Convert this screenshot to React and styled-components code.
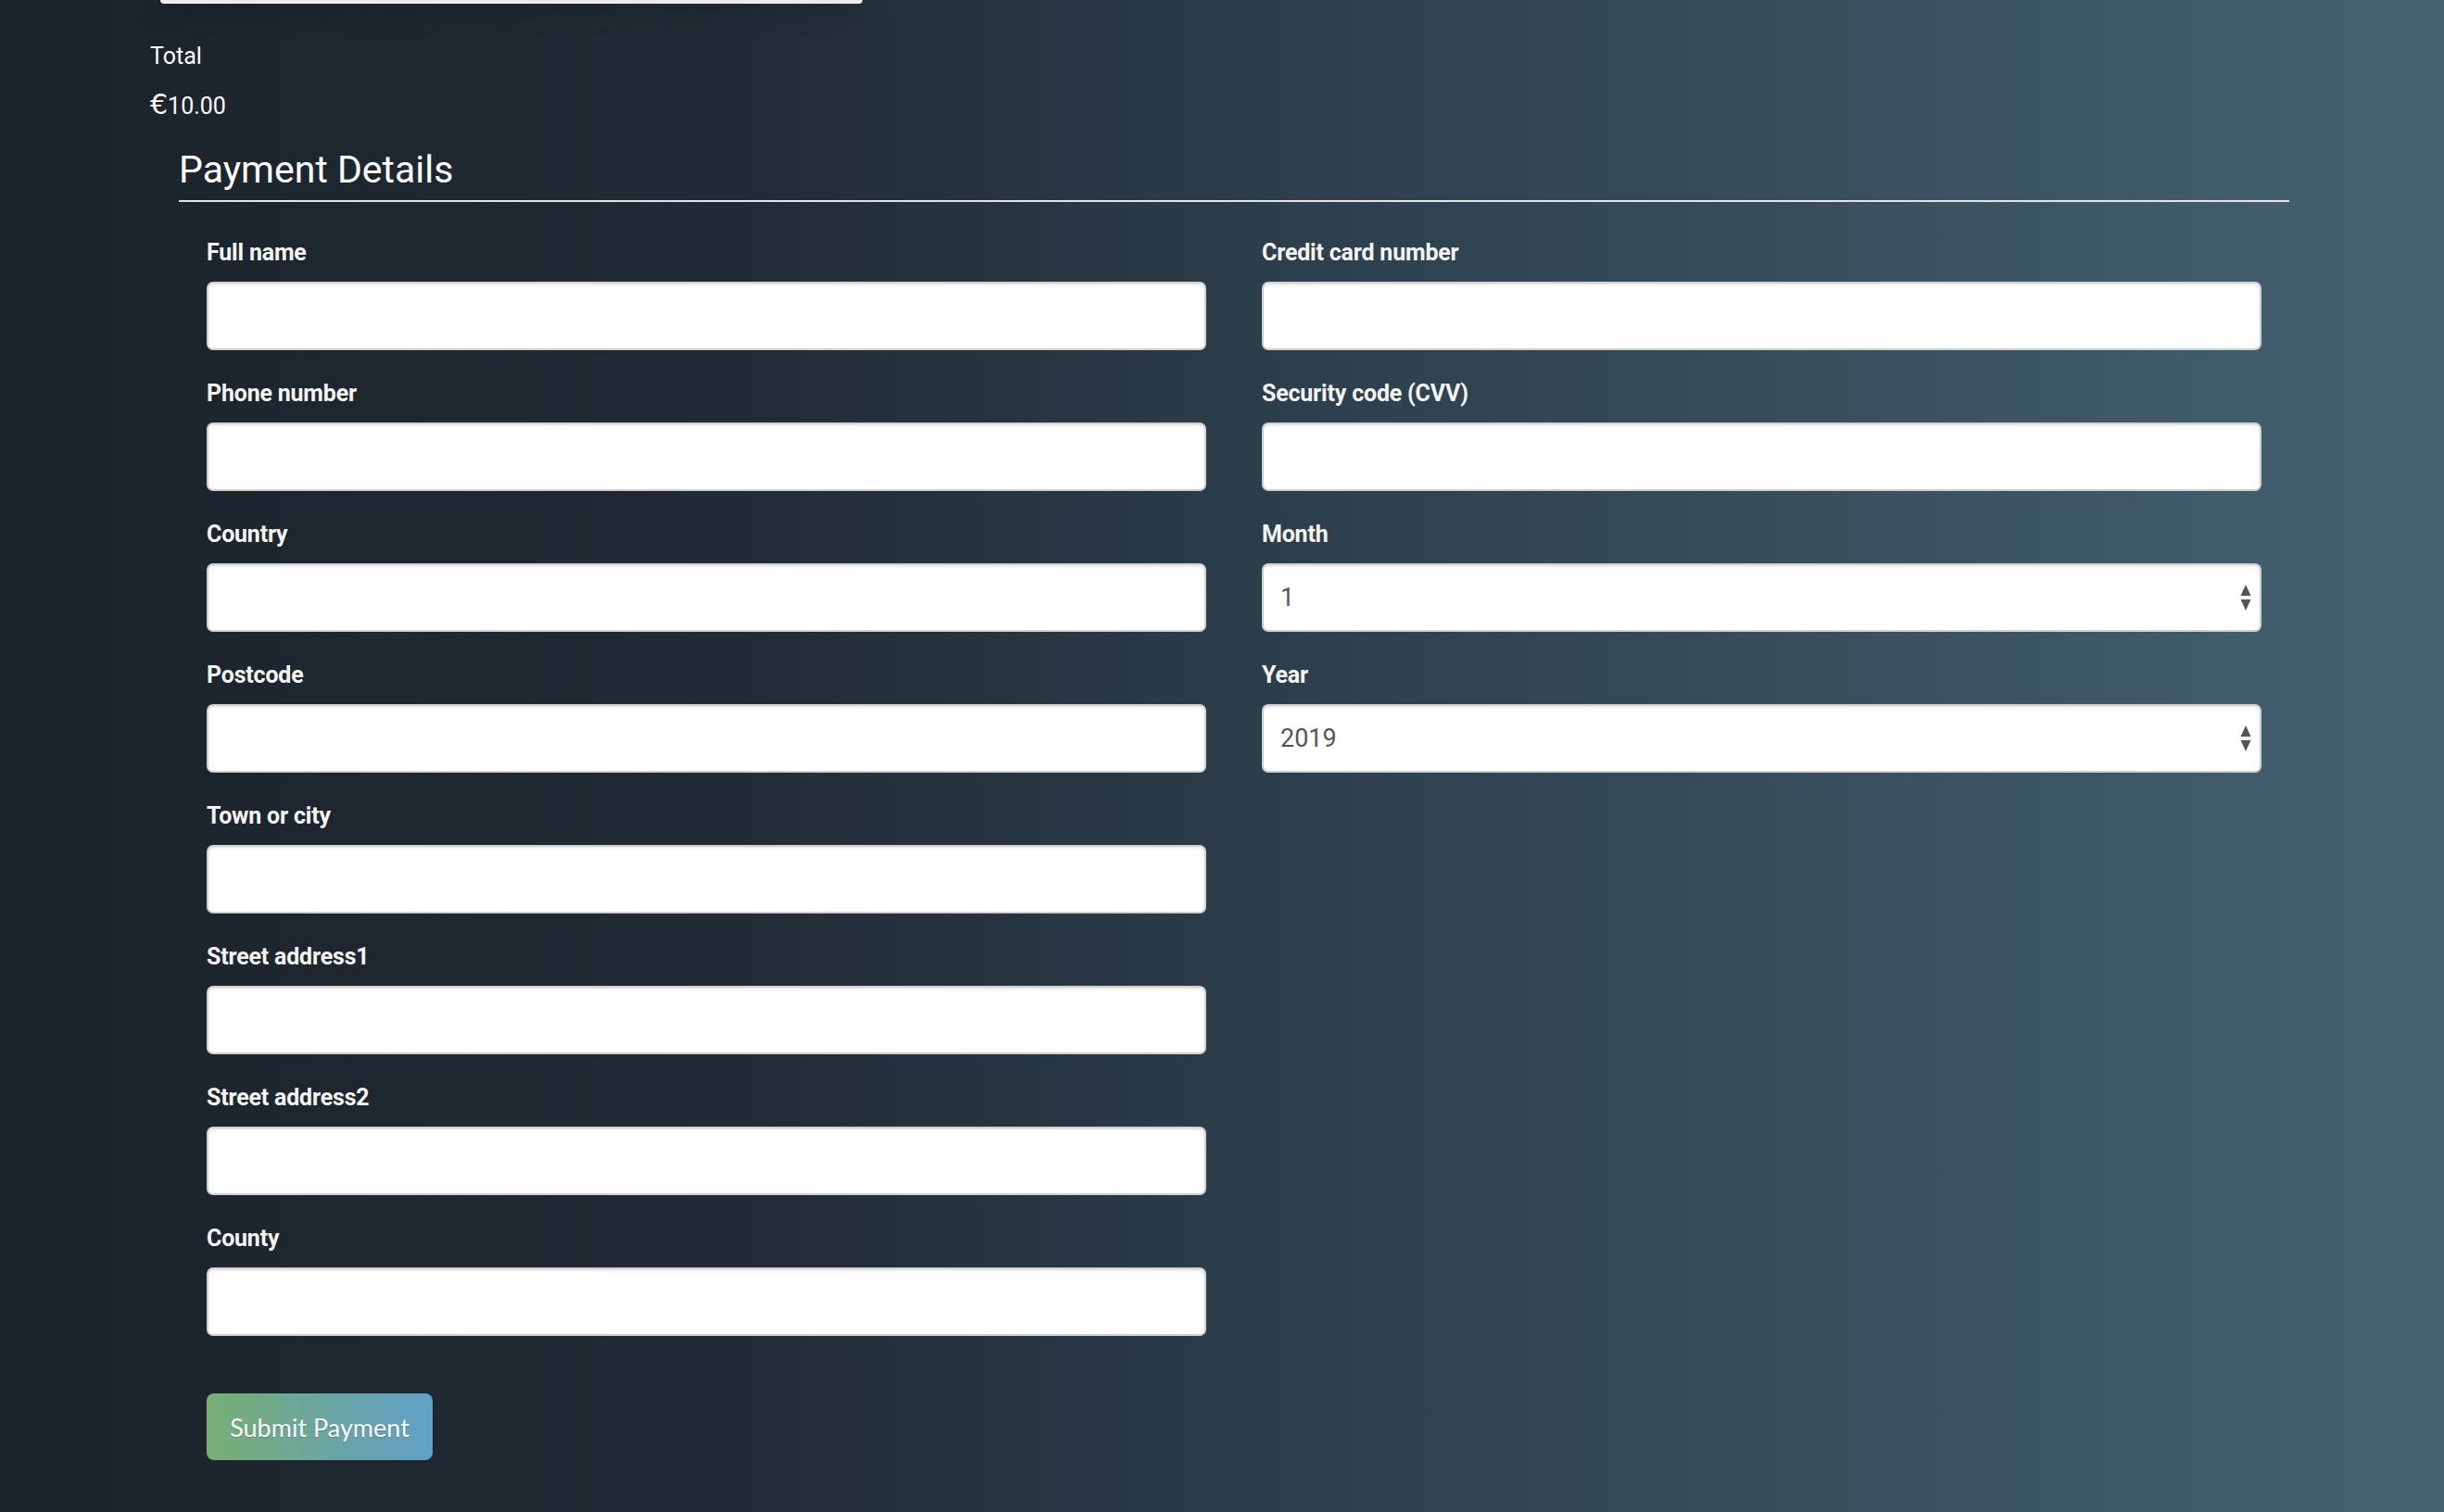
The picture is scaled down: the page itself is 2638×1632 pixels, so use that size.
import React from 'react'
import styled, { createGlobalStyle } from 'styled-components'

const GlobalStyle = createGlobalStyle`
    html, body {
        margin: 0;
        padding: 0;
    }
    body {
        min-height: 1632px;
        background: linear-gradient(to right, #1b222a 0%, #212b35 30%, #2e404e 55%, #456273 100%);
        font-family: "Roboto", sans-serif;
        color: #fff;
    }
`

const Page = styled.div`
    min-height: 1632px;
    padding: 0 167px 0 162px;
`

const CartCard = styled.div`
    margin-left: 11px;
    width: 758px;
    height: 4px;
    background: #ececec;
    border-radius: 0 0 9px 9px;
    box-shadow: 0 6px 24px rgba(0, 0, 0, 0.55);
`

const TotalLabel = styled.p`
    margin: 40px 0 0;
    font-size: 25px;
    line-height: 34px;
`

const TotalAmount = styled.p`
    margin: 18px 0 0;
    font-size: 25px;
    line-height: 34px;

    span {
        font-family: "DejaVu Sans", sans-serif;
        font-size: 30px;
    }
`

const Section = styled.section`
    margin: 26px 0 0 31px;
`

const Heading = styled.h2`
    margin: 0;
    padding-bottom: 8px;
    font-size: 41px;
    font-weight: 400;
    line-height: 50px;
    border-bottom: 2px solid #e4e4e4;
`

const Form = styled.form`
    padding: 37px 30px 60px;
`

const Columns = styled.div`
    display: grid;
    grid-template-columns: 1fr 1fr;
    column-gap: 60px;
    align-items: start;
`

const Column = styled.div`
    display: flex;
    flex-direction: column;
`

const Group = styled.div`
    margin-bottom: 29px;
`

const Label = styled.label`
    display: block;
    margin-bottom: 13px;
    font-size: 25px;
    font-weight: 700;
    line-height: 36px;
    letter-spacing: -0.2px;
    color: #f4f4f4;
`

const Input = styled.input`
    box-sizing: border-box;
    display: block;
    width: 100%;
    height: 74px;
    padding: 0 20px;
    border: 2px solid #cfcfcf;
    border-radius: 7px;
    background: #fff;
    box-shadow: inset 0 2px 2px rgba(0, 0, 0, 0.08);
    font-family: inherit;
    font-size: 27px;
    color: #555;
    outline: none;
`

const SelectWrap = styled.div`
    position: relative;
`

const Select = styled(Input).attrs({ as: 'select' })`
    appearance: none;
    -webkit-appearance: none;
    padding: 0 40px 0 18px;
`

const Arrows = styled.svg`
    position: absolute;
    right: 11px;
    top: 50%;
    transform: translateY(-50%);
    pointer-events: none;
`

const SubmitButton = styled.button`
    margin-top: 33px;
    width: 244px;
    height: 72px;
    border: none;
    border-radius: 8px;
    background: linear-gradient(to right, #78ae73, #6aa5a4 55%, #62a0c8);
    font-family: "Lato", sans-serif;
    font-size: 27px;
    color: #fff;
    text-shadow: 0 1px 1px rgba(0, 0, 0, 0.25);
    cursor: pointer;
`

const leftFields = [
    'Full name',
    'Phone number',
    'Country',
    'Postcode',
    'Town or city',
    'Street address1',
    'Street address2',
    'County',
]

const months = Array.from({ length: 12 }, (_, i) => i + 1)
const years = Array.from({ length: 11 }, (_, i) => 2019 + i)

const SelectField = ({ label, options }) => (
    <Group>
        <Label>{label}</Label>
        <SelectWrap>
            <Select defaultValue={options[0]}>
                {options.map(o => (
                    <option key={o} value={o}>{o}</option>
                ))}
            </Select>
            <Arrows width="12" height="28" viewBox="0 0 12 28">
                <path d="M6 0 L11.5 12 L0.5 12 Z" fill="#555" />
                <path d="M0.5 16 L11.5 16 L6 28 Z" fill="#555" />
            </Arrows>
        </SelectWrap>
    </Group>
)

const App = () => {
    const showLeft = leftFields.map((field, index) => {
        return (
            <Group key={index}>
                <Label>{field}</Label>
                <Input type="text" />
            </Group>
        )
    })

    return (
        <Page>
            <GlobalStyle />
            <CartCard />
            <TotalLabel>Total</TotalLabel>
            <TotalAmount><span>€</span>10.00</TotalAmount>
            <Section>
                <Heading>Payment Details</Heading>
                <Form onSubmit={e => e.preventDefault()}>
                    <Columns>
                        <Column>{showLeft}</Column>
                        <Column>
                            <Group>
                                <Label>Credit card number</Label>
                                <Input type="text" />
                            </Group>
                            <Group>
                                <Label>Security code (CVV)</Label>
                                <Input type="text" />
                            </Group>
                            <SelectField label="Month" options={months} />
                            <SelectField label="Year" options={years} />
                        </Column>
                    </Columns>
                    <SubmitButton type="submit">Submit Payment</SubmitButton>
                </Form>
            </Section>
        </Page>
    )
}

export default App
